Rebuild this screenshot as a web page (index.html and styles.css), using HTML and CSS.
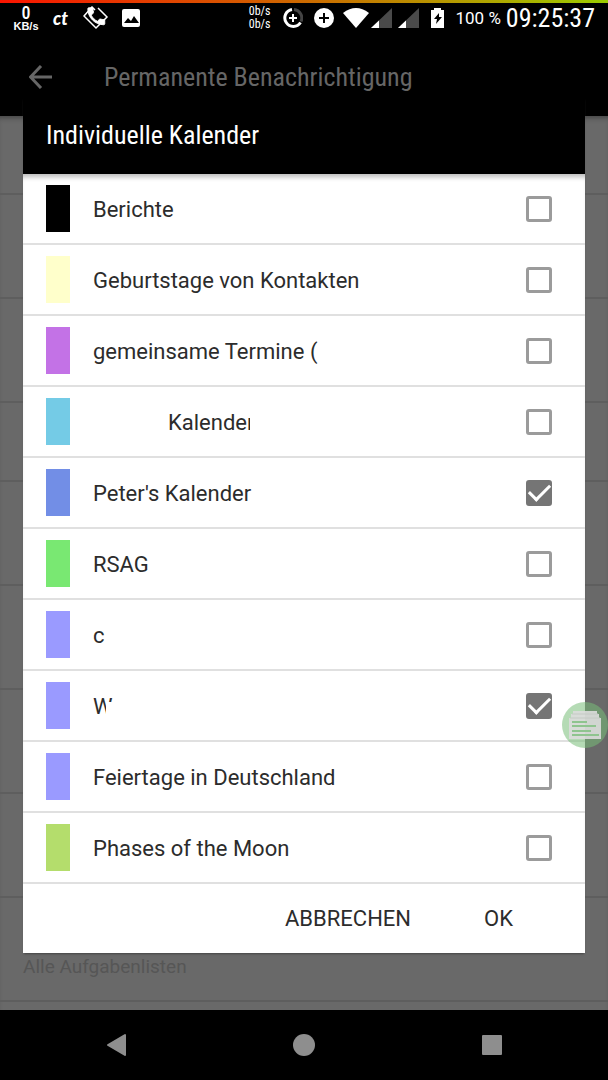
FILE: index.html
```html
<!DOCTYPE html>
<html lang="de">
<head>
<meta charset="utf-8">
<meta name="viewport" content="width=device-width, initial-scale=1">
<title>Individuelle Kalender</title>
<link rel="stylesheet" href="styles.css">
</head>
<body>
<div class="screen">
  <header class="status">
    <div class="status-group">
      <div class="rate"><span class="rate-value">0</span><span class="rate-unit">KB/s</span></div>
      <span class="ct">ct</span>
      <svg class="icon-phone" viewBox="0 0 26 24" width="26" height="24"><path d="M12 4 9 1 1 10l12 12 4-4M15 2l9 9-4 4" fill="none" stroke="#fff" stroke-width="1.500"/><path transform="translate(2 -1) scale(.94)" d="M6.620 10.790c1.440 2.830 3.760 5.140 6.590 6.590l2.200-2.200c.27-.27.67-.36 1.020-.24 1.120.37 2.330.57 3.570.57.55 0 1 .45 1 1V20c0 .55-.45 1-1 1C10.610 21 3 13.390 3 4c0-.55.45-1 1-1h3.500c.55 0 1 .45 1 1 0 1.250.2 2.450.57 3.570.11.35.03.74-.25 1.020z" fill="#fff" stroke="#fff" stroke-width="1"/></svg>
      <svg class="icon-image" viewBox="0 0 20 20" width="20" height="20"><rect x="1" y="1" width="18" height="18" rx="2" fill="#fff"/><path d="m3 15 4-5 3 3 3-5 5 7z"/></svg>
    </div>
    <div class="status-group status-right">
      <div class="speed"><span>0b/s</span><span>0b/s</span></div>
      <svg class="icon-ring" viewBox="0 0 20 20" width="20" height="20" fill="none"><path d="M11 1.500a8.500 8.500 0 0 1 7 12" stroke="#444" stroke-width="3"/><path d="M9 1.500a8.500 8.500 0 1 0 8.500 13" stroke="#fff" stroke-width="3"/><path d="M10 6v8M6 10h8" stroke="#fff" stroke-width="2"/></svg>
      <svg class="icon-plus" viewBox="0 0 20 20" width="20" height="20"><circle cx="10" cy="10" r="10" fill="#fff"/><path d="M10 5v10M5 10h10" stroke="#000" stroke-width="2"/></svg>
      <svg class="icon-wifi" viewBox="0 0 26 20" width="26" height="20"><path d="M0 5Q13-5 26 5L13 20z" fill="#fff"/></svg>
      <svg class="icon-signal" viewBox="0 0 21 20" width="21" height="20"><path d="M0 20 21 0v20z" fill="#4a4a4a"/><path d="m0 20 8-7.600V20z" fill="#fff"/></svg>
      <svg class="icon-signal2" viewBox="0 0 21 20" width="21" height="20"><path d="M0 20 21 0v20z" fill="#4a4a4a"/><path d="m0 20 8-7.600V20z" fill="#fff"/></svg>
      <svg class="icon-battery" viewBox="0 0 13 20" width="13" height="20"><path d="M0 2h3V0h7v2h3v18H0z" fill="#fff"/><path d="M8 5 3 11h3l-1 5 6-7H8z"/></svg>
      <span class="percent">100 %</span>
      <time class="clock">09:25:37</time>
    </div>
  </header>
  <div class="appbar">
    <button class="back" type="button" aria-label="Zurück"><svg viewBox="0 0 24 24" width="24" height="24"><path d="M23 12H2M12 1 1.500 12 12 23" fill="none" stroke="#666" stroke-width="3"/></svg></button>
    <h1 class="appbar-title">Permanente Benachrichtigung</h1>
  </div>
  <main class="settings">
    <div class="setting short"></div>
    <div class="setting"></div>
    <div class="setting"></div>
    <div class="setting short"></div>
    <div class="setting"></div>
    <div class="setting"></div>
    <div class="setting"></div>
    <div class="setting"></div>
    <div class="setting">Alle Aufgabenlisten</div>
  </main>
  <nav class="navbar">
    <button type="button" aria-label="Zurück"><svg viewBox="0 0 24 24" width="24" height="24"><path d="M21 2v20L4 12z" fill="#8e8e8e" stroke="#8e8e8e" stroke-width="2" stroke-linejoin="round"/></svg></button>
    <button type="button" aria-label="Startseite"><svg viewBox="0 0 24 24" width="24" height="24"><circle cx="12" cy="12" r="11" fill="#8e8e8e"/></svg></button>
    <button type="button" aria-label="Übersicht"><svg viewBox="0 0 24 24" width="24" height="24"><rect x="2" y="2" width="20" height="20" rx="1" fill="#8e8e8e"/></svg></button>
  </nav>

  <section class="dialog" role="dialog" aria-labelledby="dialog-title">
    <h2 class="dialog-title" id="dialog-title">Individuelle Kalender</h2>
    <div class="list">
      <label class="row"><span class="swatch black"></span><span class="name">Berichte</span><input type="checkbox"></label>
      <label class="row"><span class="swatch cream"></span><span class="name">Geburtstage von Kontakten</span><input type="checkbox"></label>
      <label class="row"><span class="swatch purple"></span><span class="name">gemeinsame Termine (</span><input type="checkbox"></label>
      <label class="row"><span class="swatch cyan"></span><span class="name indented"><span class="masked mask-edge">Kalender</span></span><input type="checkbox"></label>
      <label class="row"><span class="swatch blue"></span><span class="name">Peter's Kalender</span><input type="checkbox" checked></label>
      <label class="row"><span class="swatch green"></span><span class="name">RSAG</span><input type="checkbox"></label>
      <label class="row"><span class="swatch lavender"></span><span class="name">c</span><input type="checkbox"></label>
      <label class="row"><span class="swatch lavender"></span><span class="name"><span class="masked mask-corner">W</span></span><input type="checkbox" checked></label>
      <label class="row"><span class="swatch lavender"></span><span class="name">Feiertage in Deutschland</span><input type="checkbox"></label>
      <label class="row"><span class="swatch lime"></span><span class="name">Phases of the Moon</span><input type="checkbox"></label>
    </div>
    <div class="actions"><button type="button">ABBRECHEN</button><button type="button">OK</button></div>
  </section>

  <button class="float" type="button" aria-label="Notizen"><svg viewBox="0 0 46 46" width="46" height="46"><circle cx="23" cy="23" r="23" fill="#78be78" fill-opacity=".55"/><path d="M11 9h24v3h2v4h2v21H7V16h2v-4h2z" fill="#dcdcdc" fill-opacity=".9"/><path d="M10 12h26M8 16h30" stroke="#c4cac4"/><path d="M10 20h15M10 24h24M10 29h19M10 33h27" stroke="#8fc48f" stroke-width="2"/></svg></button>
</div>
</body>
</html>
```
FILE: styles.css
```css
* { box-sizing: border-box; }
body { margin: 0; background: #000; font-family: Roboto, "Noto Sans", sans-serif; }
button { border: 0; padding: 0; background: none; color: inherit; font: inherit; }
svg { display: block; flex: none; }

.screen { position: relative; display: flex; flex-direction: column; min-height: 100vh; overflow: hidden; background: #000; }

.status { display: flex; height: 33px; padding: 0 13px; border-top: 3px solid; border-image: linear-gradient(90deg, #fa1400, #cc6a00 50%, #9ccc00) 1; color: #fff; }
.status-group { display: flex; align-items: center; }
.status-right { margin-left: auto; }
.rate { display: flex; flex-direction: column; align-items: center; width: 26px; }
.rate-value { font: 500 18px/15px "Roboto Condensed", Roboto, sans-serif; }
.rate-unit { font: 700 11px/12px "Liberation Sans", sans-serif; }
.ct { width: 16px; margin-left: 14px; font: italic 900 18px/24px Lato, sans-serif; }
.icon-phone { margin-left: 14px; }
.icon-image { margin-left: 12px; }
.speed { display: flex; flex-direction: column; margin-right: 12px; font: 12px/13px "Roboto Condensed", Roboto, sans-serif; }
.icon-ring { margin-right: 11px; }
.icon-plus { margin-right: 9px; }
.icon-wifi { margin-right: 2px; }
.icon-signal { margin-right: 6px; }
.icon-signal2 { margin-right: 12px; }
.icon-battery { margin-right: 12px; }
.percent { margin-right: 5px; font-size: 17px; }
.clock { font: 26px/30px "Roboto Condensed", Roboto, sans-serif; }

.appbar { display: flex; align-items: center; height: 83px; padding: 4px 29px 0; color: #666; }
.appbar-title { margin: 0 0 0 51px; font: 400 26px/32px "Roboto Condensed", Roboto, sans-serif; white-space: nowrap; }

.settings { flex: 1; background: #696969; box-shadow: inset 0 5px 5px -3px #444; overflow: hidden; }
.setting { display: flex; align-items: flex-end; height: 104px; padding: 0 23px 19px; border-bottom: 2px solid #5e5e5e; color: #565656; font-size: 19px; line-height: 28px; }
.setting.short { height: 79px; }

.navbar { display: flex; justify-content: space-around; align-items: center; height: 70px; padding: 0 22px; }

.dialog { position: absolute; top: 97px; left: 23px; right: 23px; background: #fff; color: #2c2c2c; box-shadow: 0 2px 2px -1px #444; }
.dialog-title { margin: 0; padding: 22px 23px 23px; background: #000; color: #fff; font: 400 26px/32px "Roboto Condensed", Roboto, sans-serif; }
.list { box-shadow: inset 0 6px 5px -3px #bbb; }
.row { display: flex; align-items: center; height: 71px; padding: 0 33px 0 23px; border-bottom: 2px solid #e0e0e0; }
.swatch { width: 24px; height: 47px; }
.name { flex: 1; margin-left: 23px; padding-top: 2px; font-size: 22px; line-height: 32px; white-space: nowrap; }
.name.indented { padding-left: 75px; }

/* White patches that hide part of a private calendar name */
.masked { position: relative; display: inline-block; vertical-align: top; }
.masked::after { content: ""; position: absolute; background: #fff; }
.mask-edge::after { top: 0; bottom: 0; left: 82px; width: 8px; }
.mask-corner::after { top: 11px; bottom: 0; left: 13px; width: 12px; }

.black { background: #000; }
.cream { background: #ffffcb; }
.purple { background: #c372e6; }
.cyan { background: #74cbe6; }
.blue { background: #728ee6; }
.green { background: #79e872; }
.lavender { background: #9a9aff; }
.lime { background: #b4dd6c; }

input[type="checkbox"] { display: grid; place-items: center; width: 26px; height: 26px; margin: 0; border: 3px solid #9b9b9b; border-radius: 3px; appearance: none; background: #fff; }
input[type="checkbox"]:checked { border-color: #757575; background: #757575; }
input[type="checkbox"]:checked::before { content: ""; width: 18px; height: 9px; margin-bottom: 6px; border: solid #fff; border-width: 0 0 3px 3px; transform: rotate(-45deg); }

.actions { display: flex; justify-content: flex-end; align-items: center; gap: 73px; height: 69px; padding: 0 72px; font-size: 22px; }

.float { position: absolute; top: 702px; right: 0; }
```
